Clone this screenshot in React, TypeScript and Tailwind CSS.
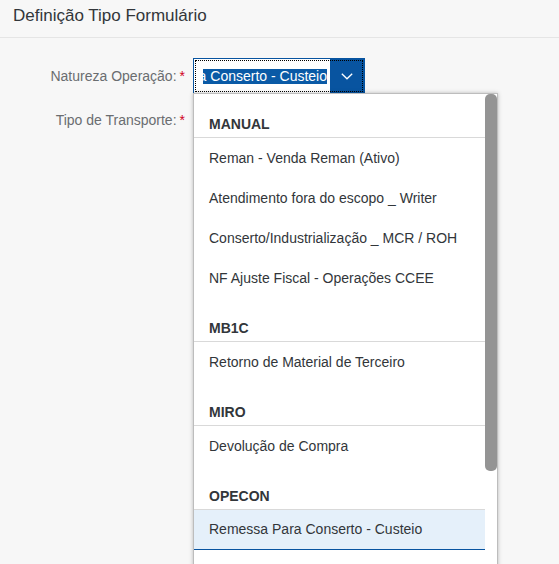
import React from "react";

type Group = { title: string; items: string[] };

const groups: Group[] = [
  {
    title: "MANUAL",
    items: [
      "Reman - Venda Reman (Ativo)",
      "Atendimento fora do escopo _ Writer",
      "Conserto/Industrialização _ MCR / ROH",
      "NF Ajuste Fiscal - Operações CCEE",
    ],
  },
  { title: "MB1C", items: ["Retorno de Material de Terceiro"] },
  { title: "MIRO", items: ["Devolução de Compra"] },
  { title: "OPECON", items: ["Remessa Para Conserto - Custeio"] },
];

const SELECTED = "Remessa Para Conserto - Custeio";

function Chevron() {
  return (
    <svg width="12" height="7" viewBox="0 0 12 7" fill="none">
      <polyline points="0.8,0.8 6,5.8 11.2,0.8" stroke="#ffffff" strokeWidth="1.3" />
    </svg>
  );
}

export default function App() {
  return (
    <div className="relative h-[564px] w-[559px] overflow-hidden bg-[#f7f7f7] font-['Liberation_Sans',Arial,sans-serif] text-[#32363a]">
      <header className="h-[38px] border-b border-[#e5e5e5] px-[13px] pt-[6px]">
        <h1 className="text-[17px] leading-[20px] text-[#32363a]">Definição Tipo Formulário</h1>
      </header>

      <div className="flex flex-col gap-[8px] pt-[20px]">
        <div className="flex items-center gap-[8px]">
          <div className="flex w-[185px] justify-end gap-[3px] text-[14px] leading-[16px] text-[#6a6d70]">
            <span>Natureza Operação:</span>
            <span className="text-[#d0021b]">*</span>
          </div>
          <div className="relative flex h-[36px] w-[172px] border border-[#0854a0] bg-white">
            <div className="flex min-w-0 flex-1 items-center pl-[9px] pr-[3px]">
              <div className="flex min-w-0 flex-1 justify-end overflow-hidden">
                <span className="shrink-0 whitespace-nowrap bg-[#0a5aa6] text-[14px] leading-[15px] text-white">
                  Remessa Para Conserto - Custeio
                </span>
              </div>
            </div>
            <div className="flex w-[34px] items-center justify-center bg-[#0854a0]">
              <Chevron />
            </div>
            <div className="pointer-events-none absolute inset-[1px] border border-dotted border-black" />
          </div>
        </div>

        <div className="flex h-[36px] items-center gap-[8px]">
          <div className="flex w-[185px] justify-end gap-[3px] text-[14px] leading-[16px] text-[#6a6d70]">
            <span>Tipo de Transporte:</span>
            <span className="text-[#d0021b]">*</span>
          </div>
        </div>
      </div>

      <div className="absolute left-[193px] top-[93px] flex h-[480px] w-[305px] border border-[#bdbdbd] bg-white shadow-[0_0_4px_rgba(0,0,0,0.25)]">
        <ul className="w-[291px]">
          {groups.map((g) => (
            <li key={g.title}>
              <div className="h-[44px] border-b border-[#d9d9d9] pl-[15px] pt-[22px] text-[14px] font-bold leading-[16px] text-[#32363a]">
                {g.title}
              </div>
              <ul>
                {g.items.map((it) => (
                  <li
                    key={it}
                    className={
                      it === SELECTED
                        ? "flex h-[40px] items-center border-b border-[#0854a0] bg-[#e5f0fa] pl-[15px] text-[14px] text-[#32363a]"
                        : "flex h-[40px] items-center pl-[15px] text-[14px] text-[#32363a]"
                    }
                  >
                    {it}
                  </li>
                ))}
              </ul>
            </li>
          ))}
          <li className="h-[40px]" />
        </ul>
        <div className="flex w-[12px] flex-col">
          <div className="h-[377px] rounded-[5px] bg-[#949494]" />
        </div>
      </div>
    </div>
  );
}
